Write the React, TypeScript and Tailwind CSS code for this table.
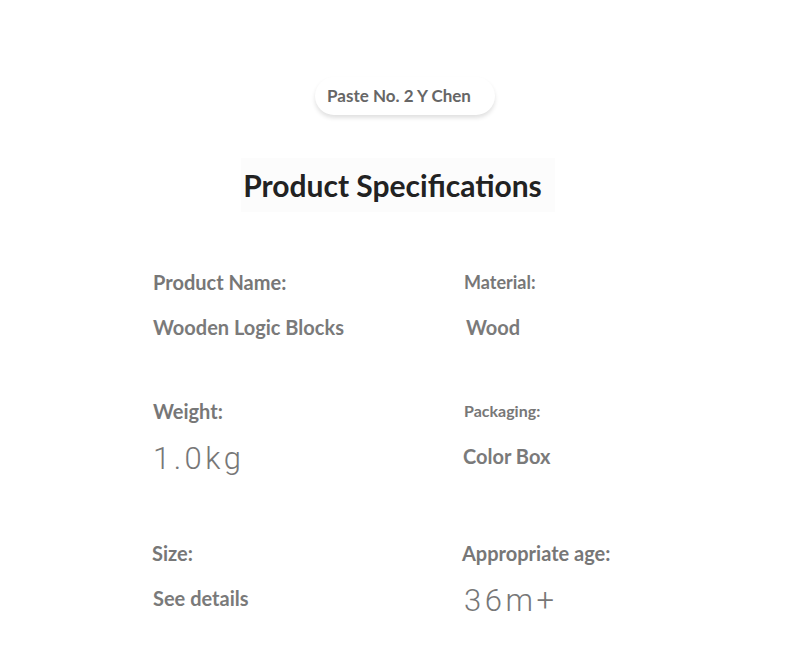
import React from 'react';

const lato = { fontFamily: 'Lato, "Open Sans", sans-serif' };

type Spec = {
  label: string;
  value: string;
  labelClass: string;
  valueClass: string;
};

const rows: [Spec, Spec][] = [
  [
    { label: 'Product Name:', value: 'Wooden Logic Blocks', labelClass: 'text-[20px]', valueClass: 'text-[20px]' },
    { label: 'Material:', value: 'Wood', labelClass: 'text-[18px]', valueClass: 'text-[20px] pl-[2px]' },
  ],
  [
    { label: 'Weight:', value: '1.0kg', labelClass: 'text-[20px]', valueClass: 'num' },
    { label: 'Packaging:', value: 'Color Box', labelClass: 'text-[16px]', valueClass: 'text-[20px] -ml-[1px]' },
  ],
  [
    { label: 'Size:', value: 'See details', labelClass: 'text-[20px] -ml-[1px]', valueClass: 'text-[20px]' },
    { label: 'Appropriate age:', value: '36m+', labelClass: 'text-[20px] -ml-[2px]', valueClass: 'num' },
  ],
];

const Cell: React.FC<{ spec: Spec }> = ({ spec }) => (
  <div className="flex flex-col">
    <div className={`h-[30px] flex items-center font-bold text-[#777] ${spec.labelClass}`} style={lato}>
      {spec.label}
    </div>
    {spec.valueClass === 'num' ? (
      <div
        className="h-[34px] mt-[16px] flex items-center text-[31px] font-light tracking-[3.5px] text-[#777]"
        style={{ fontFamily: 'Roboto, "Open Sans", sans-serif' }}
      >
        {spec.value}
      </div>
    ) : (
      <div className={`h-[30px] mt-[15px] flex items-center font-bold text-[#7a7a7a] ${spec.valueClass}`} style={lato}>
        {spec.value}
      </div>
    )}
  </div>
);

const App: React.FC = () => {
  return (
    <div className="w-[790px] h-[661px] bg-white overflow-hidden" style={lato}>
      {/* 標籤 */}
      <div className="pt-[77px] flex justify-center pl-[20px]">
        <div className="h-[38px] pl-[12px] pr-[24px] rounded-full bg-white shadow-[0_3px_4px_rgba(0,0,0,0.12)] flex items-center text-[17px] font-bold text-[#666]">
          Paste No. 2 Y Chen
        </div>
      </div>

      {/* 標題 */}
      <div className="mt-[43px] flex justify-center pl-[6px]">
        <div className="pl-[2px] pr-[13px] h-[54px] flex items-center bg-[#fcfcfc] text-[30px] font-bold text-[#222]">
          Product Specifications
        </div>
      </div>

      {/* 規格 */}
      <div className="mt-[55px] pl-[153px] flex flex-col gap-[54px]">
        {rows.map((row, i) => (
          <div key={i} className={`grid grid-cols-[311px_1fr] ${i === 2 ? 'mt-[8px]' : ''}`}>
            <Cell spec={row[0]} />
            <Cell spec={row[1]} />
          </div>
        ))}
      </div>
    </div>
  );
};

export default App;
